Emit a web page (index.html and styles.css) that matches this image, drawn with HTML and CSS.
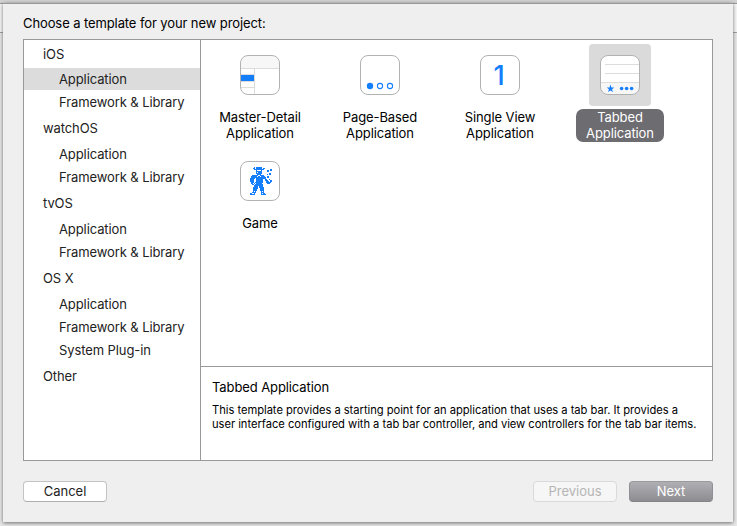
FILE: index.html
```html
<!DOCTYPE html>
<html lang="en">
<head>
<meta charset="utf-8">
<title>New Project</title>
<link rel="stylesheet" href="styles.css">
</head>
<body>
<main class="sheet">
  <h1 class="heading">Choose a template for your new project:</h1>
  <div class="panel">
    <nav class="sidebar">
      <div class="group">iOS</div>
      <div class="item selected">Application</div>
      <div class="item">Framework &amp; Library</div>
      <div class="group">watchOS</div>
      <div class="item">Application</div>
      <div class="item">Framework &amp; Library</div>
      <div class="group">tvOS</div>
      <div class="item">Application</div>
      <div class="item">Framework &amp; Library</div>
      <div class="group">OS X</div>
      <div class="item">Application</div>
      <div class="item">Framework &amp; Library</div>
      <div class="item">System Plug-in</div>
      <div class="group">Other</div>
    </nav>
    <div class="content">
      <section class="templates">
        <div class="template">
          <div class="thumb">
            <svg width="40" height="40" viewBox="0 0 40 40">
              <rect x=".5" y=".5" width="39" height="39" rx="7.5" fill="#fff"/>
              <path d="M1 13V8a7 7 0 0 1 7-7h24a7 7 0 0 1 7 7v5z" fill="#f7f7f7"/>
              <path d="M1 13.5h38M14.5 14v25M1 19.5h13M1 26.5h13M1 32.5h13" stroke="#dcdcdc" fill="none"/>
              <path d="M1 20h13v6H1z" fill="#147efb"/>
              <rect x=".5" y=".5" width="39" height="39" rx="7.5" fill="none" stroke="#b2b2b2"/>
            </svg>
          </div>
          <div class="label">Master-Detail<br>Application</div>
        </div>
        <div class="template">
          <div class="thumb">
            <svg width="40" height="40" viewBox="0 0 40 40">
              <rect x=".5" y=".5" width="39" height="39" rx="7.5" fill="#fff" stroke="#b2b2b2"/>
              <circle cx="10" cy="31" r="3.2" fill="#147efb"/>
              <circle cx="20" cy="31" r="2.6" fill="none" stroke="#147efb" stroke-width="1.1"/>
              <circle cx="30" cy="31" r="2.6" fill="none" stroke="#147efb" stroke-width="1.1"/>
            </svg>
          </div>
          <div class="label">Page-Based<br>Application</div>
        </div>
        <div class="template">
          <div class="thumb">
            <svg width="40" height="40" viewBox="0 0 40 40">
              <rect x=".5" y=".5" width="39" height="39" rx="7.5" fill="#fff" stroke="#b2b2b2"/>
              <text class="numeral" x="19" y="30" text-anchor="middle">1</text>
            </svg>
          </div>
          <div class="label">Single View<br>Application</div>
        </div>
        <div class="template chosen">
          <div class="thumb">
            <svg width="40" height="40" viewBox="0 0 40 40">
              <rect x=".5" y=".5" width="39" height="39" rx="7.5" fill="#fff"/>
              <path d="M1 28h38v4a7 7 0 0 1-7 7H8a7 7 0 0 1-7-7z" fill="#f7f7f7"/>
              <path d="M5 9.5h34M5 18.5h34M1 27.5h38" stroke="#dcdcdc" fill="none"/>
              <path d="M10.5 29.6L11.5 32.4 14.3 32.5 12.1 34.2 12.9 37 10.5 35.4 8.1 37 8.9 34.2 6.7 32.5 9.5 32.4z" fill="#147efb"/>
              <g fill="#147efb"><circle cx="21.6" cy="33.5" r="1.8"/><circle cx="26.6" cy="33.5" r="1.8"/><circle cx="31.6" cy="33.5" r="1.8"/></g>
              <rect x=".5" y=".5" width="39" height="39" rx="7.5" fill="none" stroke="#b2b2b2"/>
            </svg>
          </div>
          <div class="label">Tabbed<br>Application</div>
        </div>
        <div class="template">
          <div class="thumb">
            <svg width="40" height="40" viewBox="0 0 40 40">
              <rect x=".5" y=".5" width="39" height="39" rx="7.5" fill="#fff" stroke="#b2b2b2"/>
              <path transform="translate(9 6.5)" shape-rendering="crispEdges" stroke="#147efb" fill="none" d="M5 0h1M7 0h6M4 1h2M7 1h6M14 1h2M5 2h10M21 2h2M7 3h1M12 3h1M18 3h2M21 3h2M7 4h6M18 4h2M7 5h1M9 5h4M7 6h6M20 6h2M8 7h4M18 7h1M20 7h2M3 8h6M11 8h4M2 9h6M9 9h2M12 9h4M18 9h2M2 10h15M18 10h2M1 11h5M7 11h10M1 12h4M7 12h7M16 12h2M20 12h1M1 13h4M7 13h7M16 13h3M21 13h2M1 14h4M7 14h7M17 14h3M21 14h2M2 15h3M6 15h8M17 15h5M2 16h2M5 16h1M7 16h6M18 16h3M3 17h2M6 17h8M5 18h9M5 19h4M10 19h4M4 20h5M10 20h5M4 21h5M11 21h4M4 22h4M11 22h4M4 23h4M11 23h4M4 24h1M6 24h1M12 24h1M14 24h1M3 25h4M12 25h3M1 26h2M5 26h1M12 26h1M14 26h2M1 27h5M12 27h5"/>
            </svg>
          </div>
          <div class="label">Game</div>
        </div>
      </section>
      <section class="detail">
        <h2 class="detail-title">Tabbed Application</h2>
        <p class="detail-text">This template provides a starting point for an application that uses a tab bar. It provides a<br>user interface configured with a tab bar controller, and view controllers for the tab bar items.</p>
      </section>
    </div>
  </div>
  <footer class="actions">
    <button class="button cancel">Cancel</button>
    <button class="button" disabled>Previous</button>
    <button class="button next">Next</button>
  </footer>
</main>
</body>
</html>
```
FILE: styles.css
```css
* { box-sizing: border-box; }

body {
  margin: 0;
  height: 526px;
  padding: 3px 4px 4px 3px;
  overflow: hidden;
  background: linear-gradient(#d2d2d2 0 3px, #999 3px 4px, #f8f8f8 4px 32px, #a4a4a4 32px 33px, #e9e9e9 33px);
  font: 13px/16px Inter, "Liberation Sans", sans-serif;
  letter-spacing: -.1px;
  color: #000;
}

.sheet {
  height: 519px;
  padding: 12px 20px 0;
  background: #efefef;
  border-top: 1px solid #999;
  box-shadow: 0 1px 4px rgba(0, 0, 0, .55);
}

.heading {
  margin: 0 0 8px;
  font-size: 13px;
  font-weight: 400;
  line-height: 15px;
}

.panel {
  display: flex;
  height: 422px;
  border: 1px solid #999;
  background: #fff;
}

.sidebar {
  display: flex;
  flex-direction: column;
  gap: 1px;
  width: 177px;
  border-right: 1px solid #999;
  color: #222;
}

.group { height: 28px; line-height: 28px; padding-left: 19px; }
.group:first-child { height: 27px; }
.item { height: 22px; line-height: 22px; padding-left: 35px; }
.item.selected { background: #dcdcdc; }

.content { flex: 1; display: flex; flex-direction: column; }

.templates {
  display: grid;
  grid-template-columns: repeat(4, 120px);
  grid-auto-rows: 106px;
  height: 326px;
  padding-top: 4px;
  margin-left: -1px;
}

.template { display: flex; flex-direction: column; align-items: center; gap: 3px; }

.thumb { width: 62px; height: 62px; padding: 11px; border-radius: 4px; }
.thumb svg { display: block; }
.numeral { font: 500 27px Inter, sans-serif; fill: #147efb; }

.label { width: 88px; height: 33px; border-radius: 7px; text-align: center; white-space: nowrap; }

.chosen .thumb { background: #dadada; }
.chosen .label { background: #6d6c71; color: #fff; }

.detail { flex: 1; border-top: 1px solid #999; padding: 12px 11px; }
.detail-title { margin: 0; font-size: 13px; font-weight: 400; }
.detail-text { margin: 8px 0 0; font-size: 11.2px; line-height: 14px; letter-spacing: -.04px; white-space: nowrap; }

.actions { display: flex; gap: 12px; margin-top: 20px; }

.button {
  width: 84px;
  height: 21px;
  padding: 0;
  border: 1px solid #c3c3c3;
  border-bottom-color: #afafaf;
  border-radius: 4px;
  background: #fff;
  color: #222;
  font: inherit;
  line-height: 19px;
}
.button.cancel { margin-right: auto; }
.button:disabled { background: #f6f6f6; border-color: #d9d9d9; color: #b5b5b5; }
.button.next { border-color: #9a999e #918f95 #858489; background: linear-gradient(#b0afb4, #8d8c91); color: #fff; }
```
